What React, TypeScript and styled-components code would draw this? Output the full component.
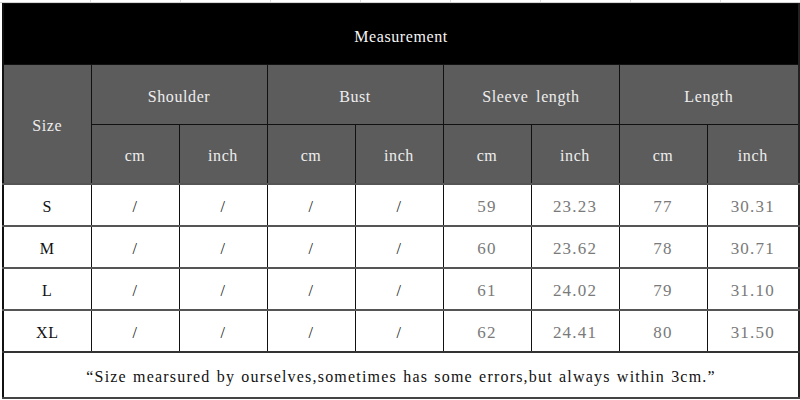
import styled, { createGlobalStyle } from 'styled-components';

const GlobalStyle = createGlobalStyle`
    html, body {
        margin: 0;
        padding: 0;
        background: #ffffff;
        width: 800px;
        height: 400px;
        overflow: hidden;
    }
`;

const Sheet = styled.div`
    padding: 3px 0 0 2px;
    font-family: "Liberation Serif", "DejaVu Serif", serif;
    background:
        linear-gradient(#d4d4d4, #d4d4d4) 0 2px / 100% 1px no-repeat,
        repeating-linear-gradient(90deg, transparent 0 89px, #dcdcdc 89px 90px) 1px 0 / 100% 3px no-repeat,
        #ffffff;
`;

const Table = styled.table`
    width: 796px;
    table-layout: fixed;
    border-collapse: collapse;
    border-left: 2px solid #111;
    border-right: 2px solid #222;
    border-bottom: 2px solid #444;
`;

const Row = styled.tr<{ $h: number }>`
    height: ${(p) => p.$h}px;
`;

type Tone = 'title' | 'head' | 'body' | 'num' | 'note';

const Cell = styled.td<{ $tone: Tone }>`
    padding: 5px 0 0;
    text-align: center;
    vertical-align: middle;
    font-size: 16px;
    letter-spacing: 0.6px;
    word-spacing: 3px;
    white-space: nowrap;
    border: 1px solid #111;
    background: ${(p) => (p.$tone === 'title' ? '#000' : p.$tone === 'head' ? '#5c5c5c' : '#fff')};
    color: ${(p) =>
        p.$tone === 'title' ? '#f4f4f4'
        : p.$tone === 'head' ? '#eeeeee'
        : p.$tone === 'num' ? '#7a7a7a'
        : '#111'};
    ${(p) => p.$tone === 'num' && 'font-size: 17px; letter-spacing: 1.2px;'}
    ${(p) => p.$tone === 'note' && 'letter-spacing: 1.2px; word-spacing: 1px;'}
`;

const DataRow = styled(Row)`
    & > td {
        border-top: 2px solid #555;
    }
`;

const NoteRow = styled(Row)`
    & > td {
        border-top: 2px solid #333;
    }
`;

const parts = ['Shoulder', 'Bust', 'Sleeve length', 'Length'];

const sizes = [
    { size: 'S', sleeve: ['59', '23.23'], length: ['77', '30.31'] },
    { size: 'M', sleeve: ['60', '23.62'], length: ['78', '30.71'] },
    { size: 'L', sleeve: ['61', '24.02'], length: ['79', '31.10'] },
    { size: 'XL', sleeve: ['62', '24.41'], length: ['80', '31.50'] },
];

const SizeChart = (): JSX.Element => {
    return (
        <Sheet>
            <Table>
                <colgroup>
                    {[88, 88, 88, 88, 88, 88, 88, 88, 92].map((w, i) => (
                        <col key={i} style={{ width: w }} />
                    ))}
                </colgroup>
                <tbody>
                    <Row $h={61}>
                        <Cell $tone='title' colSpan={9}>Measurement</Cell>
                    </Row>
                    <Row $h={60}>
                        <Cell $tone='head' rowSpan={2}>Size</Cell>
                        {parts.map((p) => (
                            <Cell $tone='head' colSpan={2} key={p}>{p}</Cell>
                        ))}
                    </Row>
                    <Row $h={59}>
                        {parts.map((p) => [
                            <Cell $tone='head' key={p + 'cm'}>cm</Cell>,
                            <Cell $tone='head' key={p + 'in'}>inch</Cell>,
                        ])}
                    </Row>
                    {sizes.map((s) => (
                        <DataRow $h={42} key={s.size}>
                            <Cell $tone='body'>{s.size}</Cell>
                            <Cell $tone='body'>/</Cell>
                            <Cell $tone='body'>/</Cell>
                            <Cell $tone='body'>/</Cell>
                            <Cell $tone='body'>/</Cell>
                            <Cell $tone='num'>{s.sleeve[0]}</Cell>
                            <Cell $tone='num'>{s.sleeve[1]}</Cell>
                            <Cell $tone='num'>{s.length[0]}</Cell>
                            <Cell $tone='num'>{s.length[1]}</Cell>
                        </DataRow>
                    ))}
                    <NoteRow $h={46}>
                        <Cell $tone='note' colSpan={9}>
                            “Size mearsured by ourselves,sometimes has some errors,but always within 3cm.”
                        </Cell>
                    </NoteRow>
                </tbody>
            </Table>
        </Sheet>
    );
};

const App = (): JSX.Element => (
    <>
        <GlobalStyle />
        <SizeChart />
    </>
);

export default App;
